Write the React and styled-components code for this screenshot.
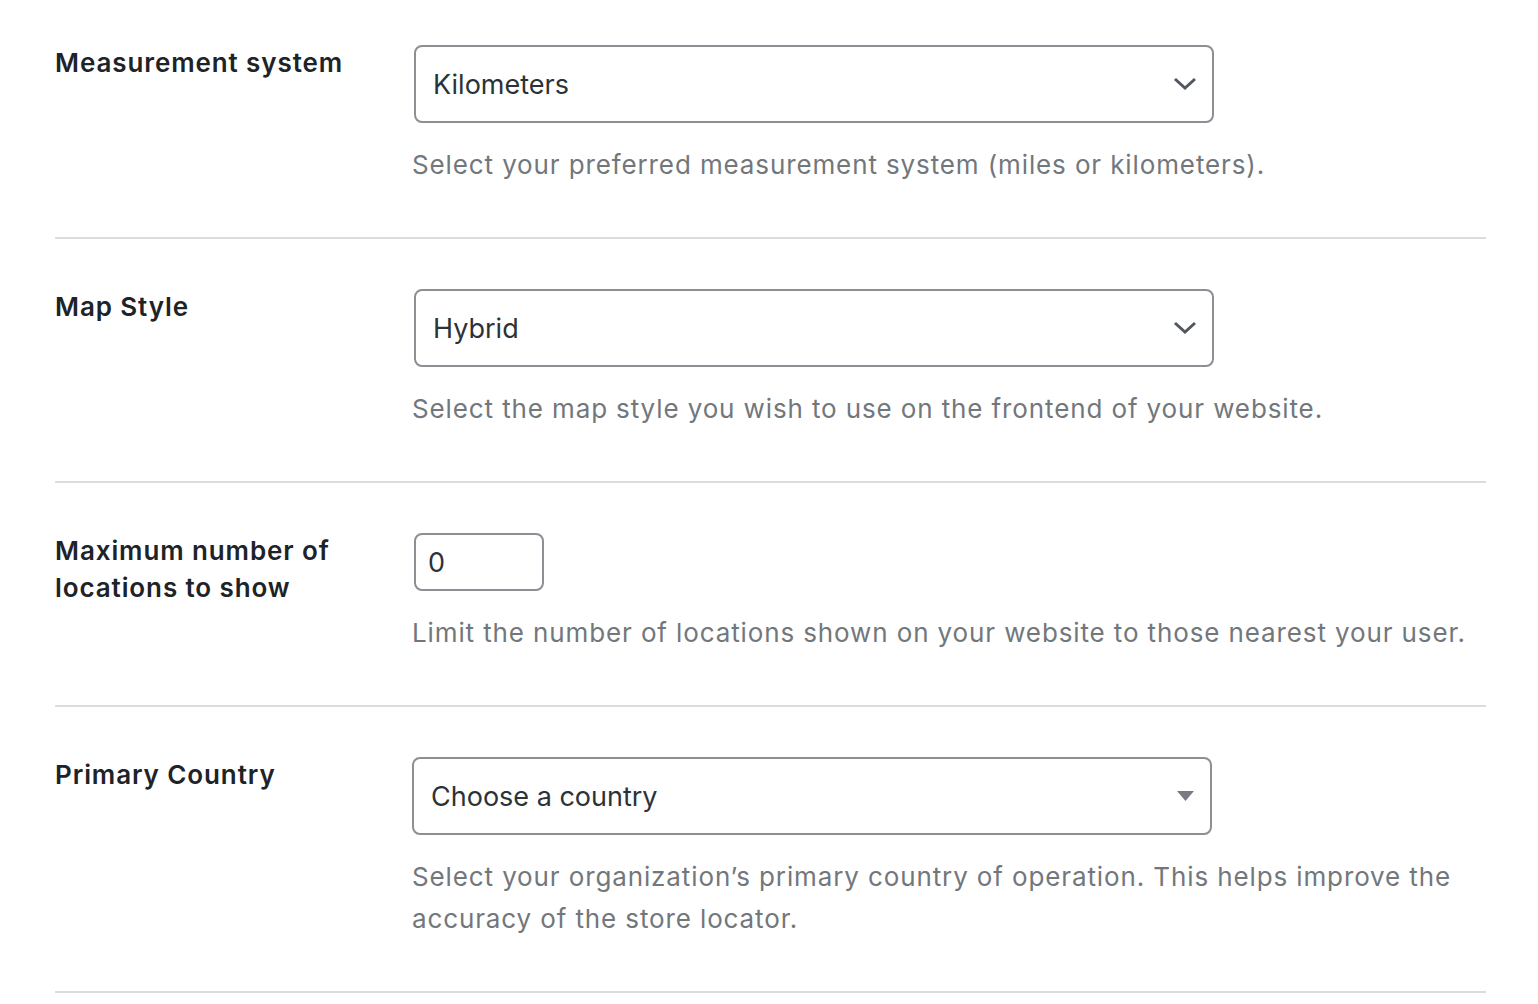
import React from 'react';
import styled, { createGlobalStyle } from 'styled-components';

const Global = createGlobalStyle`
body {
  margin: 0;
  background: #fff;
  font-family: Inter, "Noto Sans", "Liberation Sans", sans-serif;
  -webkit-font-smoothing: antialiased;
}
`;

const Page = styled.div`
width: 1431px;
padding-left: 55px;
`;

const Row = styled.div`
display: grid;
grid-template-columns: 359px 1fr;
padding: 50px 0 51px;
border-bottom: 2px solid #dcdcde;
&:first-child {
  padding-top: 45px;
}
`;

const Label = styled.div`
font-size: 26px;
line-height: 37px;
font-weight: 600;
letter-spacing: 0.9px;
color: #1d2327;
margin-top: -1.5px;
width: 300px;
`;

const Field = styled.div`
display: flex;
flex-direction: column;
align-items: flex-start;
`;

const SelectBox = styled.div`
box-sizing: border-box;
width: 800px;
height: 78px;
border: 2px solid #8c8f94;
border-radius: 8px;
display: flex;
align-items: center;
justify-content: space-between;
padding: 0 15px 0 17px;
margin-left: ${p => (p.$native ? '-2px' : '0')};
font-size: 27px;
color: #2c3338;
`;

const NumberBox = styled.div`
box-sizing: border-box;
width: 130px;
height: 58px;
border: 2px solid #8c8f94;
border-radius: 8px;
display: flex;
align-items: center;
padding-left: 12px;
font-size: 27px;
color: #2c3338;
`;

const Description = styled.p`
margin: 21px 0 0 -2px;
font-size: 26px;
line-height: 42px;
letter-spacing: 0.88px;
color: #72777c;
max-width: 1074px;
`;

const Chevron = () => (
  <svg width="24" height="14" viewBox="0 0 24 14">
    <polyline points="2,2 12,11 22,2" fill="none" stroke="#50575e" strokeWidth="3" />
  </svg>
);

const Triangle = () => (
  <svg width="17" height="10" viewBox="0 0 17 10" style={{ marginRight: 1 }}>
    <polygon points="0,0 17,0 8.5,10" fill="#787c82" />
  </svg>
);

export default function App() {
  return (
    <Page>
      <Global />
      <Row>
        <Label>Measurement system</Label>
        <Field>
          <SelectBox>
            <span>Kilometers</span>
            <Chevron />
          </SelectBox>
          <Description>Select your preferred measurement system (miles or kilometers).</Description>
        </Field>
      </Row>
      <Row>
        <Label>Map Style</Label>
        <Field>
          <SelectBox>
            <span>Hybrid</span>
            <Chevron />
          </SelectBox>
          <Description>Select the map style you wish to use on the frontend of your website.</Description>
        </Field>
      </Row>
      <Row>
        <Label>Maximum number of locations to show</Label>
        <Field>
          <NumberBox>0</NumberBox>
          <Description>Limit the number of locations shown on your website to those nearest your user.</Description>
        </Field>
      </Row>
      <Row>
        <Label>Primary Country</Label>
        <Field>
          <SelectBox $native>
            <span>Choose a country</span>
            <Triangle />
          </SelectBox>
          <Description>Select your organization’s primary country of operation. This helps improve the accuracy of the store locator.</Description>
        </Field>
      </Row>
    </Page>
  );
}
